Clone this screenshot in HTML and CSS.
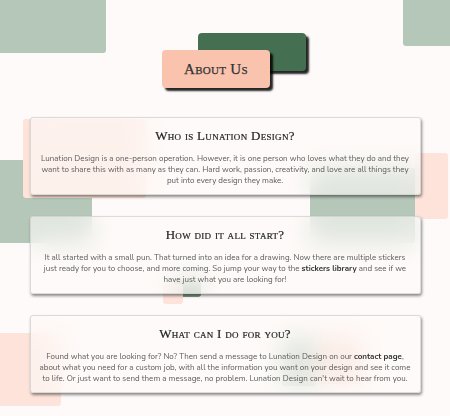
FILE: index.html
```html
<!DOCTYPE html>
<html lang="en">
<head>
<meta charset="utf-8">
<title>About Us - Lunation Design</title>
<link rel="stylesheet" href="styles.css">
</head>
<body>
<div class="page">
  <div class="deco" aria-hidden="true">
    <span class="shape sage s-tl"></span>
    <span class="shape sage s-tr"></span>
    <span class="shape sage s-l"></span>
    <span class="shape peach s-p1"></span>
    <span class="shape sage s-r"></span>
    <span class="shape peach s-pr"></span>
    <span class="shape sage s-small"></span>
    <span class="shape peach s-psmall"></span>
    <span class="shape peach s-bl"></span>
    <span class="shape sage s-blob1"></span>
    <span class="shape peach s-blob2"></span>
  </div>

  <header class="hero">
    <div class="tag-stack">
      <span class="tag tag-back"></span>
      <h1 class="tag tag-front">About Us</h1>
    </div>
  </header>

  <main class="cards">
    <section class="card">
      <h2 class="card-title">Who is Lunation Design?</h2>
      <p class="card-text">Lunation Design is a one-person operation. However, it is one person who loves what they do and they want to share this with as many as they can. Hard work, passion, creativity, and love are all things they put into every design they make.</p>
    </section>
    <section class="card">
      <h2 class="card-title">How did it all start?</h2>
      <p class="card-text">It all started with a small pun. That turned into an idea for a drawing. Now there are multiple stickers just ready for you to choose, and more coming. So jump your way to the <a class="link" href="#">stickers library</a> and see if we have just what you are looking for!</p>
    </section>
    <section class="card">
      <h2 class="card-title">What can I do for you?</h2>
      <p class="card-text">Found what you are looking for? No? Then send a message to Lunation Design on our <a class="link" href="#">contact page</a>, about what you need for a custom job, with all the information you want on your design and see it come to life. Or just want to send them a message, no problem. Lunation Design can't wait to hear from you.</p>
    </section>
  </main>
</div>
</body>
</html>
```

FILE: styles.css
```css
* { box-sizing: border-box; }

html, body {
  margin: 0;
  padding: 0;
  background: #fefaf9;
}

body {
  font-family: "Nunito", Lato, "Open Sans", sans-serif;
  color: #5b5b5b;
}

.page {
  position: relative;
  width: 450px;
  height: 416px;
  overflow: hidden;
}

/* decorative background shapes */
.deco {
  position: absolute;
  inset: 0;
  z-index: 0;
}
.shape {
  position: absolute;
  display: block;
  border-radius: 3px;
}
.sage { background: #b4c7b8; }
.peach { background: #fde3da; }

.s-tl { left: 0; top: 0; width: 106px; height: 53px; border-radius: 0 0 3px 0; }
.s-tr { left: 403px; top: 0; width: 47px; height: 46px; border-radius: 0 0 0 3px; }
.s-l { left: 0; top: 160px; width: 92px; height: 83px; border-radius: 0 3px 3px 0; }
.s-p1 { left: 23px; top: 119px; width: 123px; height: 79px; }
.s-r { left: 310px; top: 168px; width: 105px; height: 75px; }
.s-pr { left: 415px; top: 153px; width: 33px; height: 66px; }
.s-small { left: 174px; top: 280px; width: 27px; height: 17px; background: #7d9c84; }
.s-psmall { left: 163px; top: 284px; width: 20px; height: 20px; }
.s-bl { left: 0; top: 333px; width: 61px; height: 73px; border-radius: 0 3px 3px 0; }
.s-blob1 { left: 282px; top: 338px; width: 34px; height: 48px; background: #b4c7b8; }
.s-blob2 { left: 318px; top: 336px; width: 44px; height: 48px; background: #fbd9cb; }

/* header */
.hero {
  position: relative;
  z-index: 1;
  height: 117px;
  padding-top: 50px;
  padding-left: 162px;
}
.tag-stack {
  position: relative;
  width: 108px;
  height: 38px;
}
.tag {
  display: block;
  width: 108px;
  height: 38px;
  border-radius: 4px;
  box-shadow: 3px 3px 2px rgba(0, 0, 0, 0.85);
}
.tag-back {
  position: absolute;
  left: 36px;
  top: -17px;
  background: #446f51;
}
.tag-front {
  position: relative;
  margin: 0;
  background: #f9c3ad;
  font-family: "Liberation Serif", "DejaVu Serif", serif;
  font-variant: small-caps;
  font-weight: normal;
  font-size: 15px;
  color: #333;
  -webkit-text-stroke: 0.25px #333;
  display: flex;
  align-items: center;
  justify-content: center;
  letter-spacing: 0.3px;
}

/* cards */
.cards {
  position: relative;
  z-index: 1;
  display: flex;
  flex-direction: column;
  gap: 21px;
  width: 391px;
  margin: 0 auto;
}
.card {
  height: 78px;
  padding: 11px 7px 0;
  background: rgba(254, 250, 249, 0.6);
  -webkit-backdrop-filter: blur(12px);
  backdrop-filter: blur(12px);
  border: 1px solid rgba(205, 205, 205, 0.7);
  border-radius: 3px;
  box-shadow: 1px 2px 3px rgba(0, 0, 0, 0.45);
  text-align: center;
}
.card-title {
  margin: 0;
  font-family: "Liberation Serif", "DejaVu Serif", serif;
  font-variant: small-caps;
  font-weight: normal;
  font-size: 13px;
  line-height: 14px;
  color: #222;
  -webkit-text-stroke: 0.2px #222;
  letter-spacing: 0.3px;
}
.card-text {
  margin: 10px 0 0;
  font-size: 8px;
  line-height: 11px;
  color: #5a5a5a;
}
.link {
  color: #333;
  font-weight: bold;
  text-decoration: none;
}
```
